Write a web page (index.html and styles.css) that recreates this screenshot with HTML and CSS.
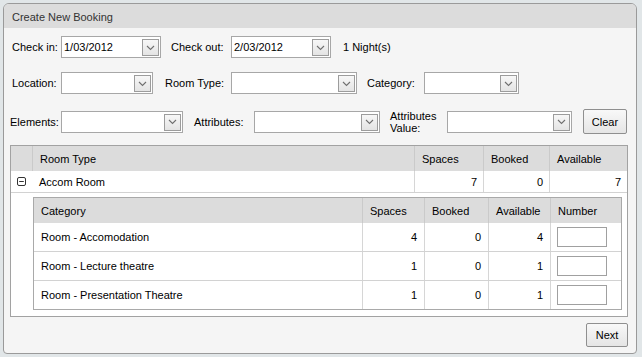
FILE: index.html
```html
<!DOCTYPE html>
<html>
<head>
<meta charset="utf-8">
<link rel="stylesheet" href="styles.css">
</head>
<body>
<div class="panel">
  <div class="panel-head">Create New Booking</div>
  <div class="panel-body">
    <div class="row r1">
      <span class="lbl w49">Check in:</span>
      <div class="sel w100"><span class="val">1/03/2012</span><span class="dd"><svg width="9" height="6" viewBox="0 0 9 6"><path d="M1 1 L4.5 4.5 L8 1" fill="none" stroke="#707070" stroke-width="1.1"/></svg></span></div>
      <span class="lbl w60 ml10">Check out:</span>
      <div class="sel w100"><span class="val">2/03/2012</span><span class="dd"><svg width="9" height="6" viewBox="0 0 9 6"><path d="M1 1 L4.5 4.5 L8 1" fill="none" stroke="#707070" stroke-width="1.1"/></svg></span></div>
      <span class="lbl ml12">1 Night(s)</span>
    </div>
    <div class="row r2">
      <span class="lbl w49">Location:</span>
      <div class="sel w92"><span class="val"></span><span class="dd"><svg width="9" height="6" viewBox="0 0 9 6"><path d="M1 1 L4.5 4.5 L8 1" fill="none" stroke="#707070" stroke-width="1.1"/></svg></span></div>
      <span class="lbl w66 ml12">Room Type:</span>
      <div class="sel w126"><span class="val"></span><span class="dd"><svg width="9" height="6" viewBox="0 0 9 6"><path d="M1 1 L4.5 4.5 L8 1" fill="none" stroke="#707070" stroke-width="1.1"/></svg></span></div>
      <span class="lbl w57 ml10">Category:</span>
      <div class="sel w95"><span class="val"></span><span class="dd"><svg width="9" height="6" viewBox="0 0 9 6"><path d="M1 1 L4.5 4.5 L8 1" fill="none" stroke="#707070" stroke-width="1.1"/></svg></span></div>
    </div>
    <div class="row r3">
      <span class="lbl w51 mlneg2">Elements:</span>
      <div class="sel w122"><span class="val"></span><span class="dd"><svg width="9" height="6" viewBox="0 0 9 6"><path d="M1 1 L4.5 4.5 L8 1" fill="none" stroke="#707070" stroke-width="1.1"/></svg></span></div>
      <span class="lbl w60 ml11">Attributes:</span>
      <div class="sel w126"><span class="val"></span><span class="dd"><svg width="9" height="6" viewBox="0 0 9 6"><path d="M1 1 L4.5 4.5 L8 1" fill="none" stroke="#707070" stroke-width="1.1"/></svg></span></div>
      <span class="lbl w57 ml10 two">Attributes<br>Value:</span>
      <div class="sel w125"><span class="val"></span><span class="dd"><svg width="9" height="6" viewBox="0 0 9 6"><path d="M1 1 L4.5 4.5 L8 1" fill="none" stroke="#707070" stroke-width="1.1"/></svg></span></div>
      <button class="btn clear">Clear</button>
    </div>

    <div class="tbl">
      <div class="trow outer thead">
        <div class="c"></div>
        <div class="c">Room Type</div>
        <div class="c">Spaces</div>
        <div class="c">Booked</div>
        <div class="c">Available</div>
      </div>
      <div class="trow outer tdata">
        <div class="c icon"><svg width="9" height="9" viewBox="0 0 9 9"><rect x="0.5" y="0.5" width="8" height="8" rx="1.5" fill="none" stroke="#333" stroke-width="1"/><path d="M2.2 4.5 H6.8" stroke="#333" stroke-width="1"/></svg></div>
        <div class="c nb">Accom Room</div>
        <div class="c num">7</div>
        <div class="c num">0</div>
        <div class="c num">7</div>
      </div>
      <div class="nest-wrap">
        <div class="ntbl">
          <div class="trow inner thead">
            <div class="c">Category</div>
            <div class="c">Spaces</div>
            <div class="c">Booked</div>
            <div class="c">Available</div>
            <div class="c">Number</div>
          </div>
          <div class="trow inner tdata first">
            <div class="c">Room - Accomodation</div>
            <div class="c num">4</div>
            <div class="c num">0</div>
            <div class="c num">4</div>
            <div class="c"><input class="numin" type="text"></div>
          </div>
          <div class="trow inner tdata">
            <div class="c">Room - Lecture theatre</div>
            <div class="c num">1</div>
            <div class="c num">0</div>
            <div class="c num">1</div>
            <div class="c"><input class="numin" type="text"></div>
          </div>
          <div class="trow inner tdata">
            <div class="c">Room - Presentation Theatre</div>
            <div class="c num">1</div>
            <div class="c num">0</div>
            <div class="c num">1</div>
            <div class="c"><input class="numin" type="text"></div>
          </div>
        </div>
      </div>
    </div>

    <div class="foot">
      <button class="btn next">Next</button>
    </div>
  </div>
</div>
</body>
</html>
```

FILE: styles.css
```css
* { box-sizing: border-box; }
html, body { margin: 0; padding: 0; }
body {
  background: #e1e6e8;
  font-family: "Liberation Sans", Arial, sans-serif;
  font-size: 11px;
  color: #000;
  width: 642px;
  height: 357px;
  overflow: hidden;
}
.panel {
  margin: 3px 0 0 3px;
  width: 634px;
  height: 351px;
  border: 1px solid #9a9a9a;
  border-radius: 6px 6px 4px 4px;
  background: #f5f5f5;
  overflow: hidden;
  display: flex;
  flex-direction: column;
}
.panel-head {
  height: 24px;
  background: #dcdcdc;
  padding: 3px 0 0 8px;
  line-height: 21px;
  font-size: 11px;
  color: #333;
}
.panel-body {
  flex: 1;
  display: flex;
  flex-direction: column;
}
.row {
  display: flex;
  align-items: center;
  padding-left: 8px;
}
.r1 { margin-top: 8px; height: 22px; }
.r2 { margin-top: 14px; height: 22px; }
.r3 { margin-top: 15px; height: 25px; }
.lbl { white-space: nowrap; flex: none; }
.two { white-space: normal; line-height: 12px; }
.w49 { width: 49px; }
.w51 { width: 51px; }
.w57 { width: 57px; }
.w60 { width: 60px; }
.w66 { width: 66px; }
.ml10 { margin-left: 10px; }
.ml11 { margin-left: 11px; }
.ml12 { margin-left: 12px; }
.mlneg2 { margin-left: -2px; }
.sel {
  flex: none;
  height: 22px;
  border: 1px solid #a7a7a7;
  background: #fff;
  display: flex;
  align-items: stretch;
}
.w92 { width: 92px; }
.w95 { width: 95px; }
.w100 { width: 100px; }
.w122 { width: 122px; }
.w125 { width: 125px; }
.w126 { width: 126px; }
.sel .val {
  flex: 1;
  padding-left: 2px;
  line-height: 20px;
  color: #000;
}
.sel .dd {
  width: 17px;
  margin: 2px 1px 1px 0;
  border: 1px solid #9c9c9c;
  background: linear-gradient(#f7f7f7, #e4e4e4);
  display: flex;
  align-items: center;
  justify-content: center;
}
.btn {
  font-family: "Liberation Sans", Arial, sans-serif;
  font-size: 11px;
  color: #000;
  border: 1px solid #8f8f8f;
  border-radius: 2px;
  background: linear-gradient(#f8f8f8, #e5e5e5);
  padding: 0;
}
.clear {
  margin-left: 11px;
  width: 44px;
  height: 25px;
}
.tbl {
  margin: 11px 8px 0 6px;
  border: 1px solid #a2a2a2;
  background: #fff;
}
.trow { display: grid; }
.outer { grid-template-columns: 21px 382px 69px 66px 78px; }
.inner { grid-template-columns: 328px 62px 64px 62px 71px; }
.thead { background: #dcdcdc; height: 25px; }
.outer.tdata { height: 22px; border-bottom: 1px solid #d2d2d2; }
.c {
  display: flex;
  align-items: center;
  padding: 0 7px;
  white-space: nowrap;
  color: #000;
}
.trow .c + .c { border-left: 1px solid #cacaca; }
.outer.tdata .c.nb { border-left: none; }
.outer.tdata .c.num + .c, .outer.tdata .c.nb + .c { border-left: 1px solid #d6d6d6; }
.c.num { justify-content: flex-end; padding-right: 6px; }
.inner .c.num { padding-right: 7px; }
.c.icon { padding: 0 0 0 6px; }
.nest-wrap { padding: 4px 5px 6px 22px; }
.ntbl {
  border: 1px solid #a9a9a9;
  background: #fff;
}
.inner.tdata { height: 29px; border-top: 1px solid #d2d2d2; }
.inner.tdata.first { height: 28px; border-top: none; }
.inner.tdata .c + .c { border-left: 1px solid #d6d6d6; }
.numin {
  width: 50px;
  height: 20px;
  border: 1px solid #a0a0a0;
  background: #fff;
  margin: 0 0 0 -1px;
  padding: 0;
}
.foot {
  display: flex;
  justify-content: flex-end;
  padding: 6px 8px 0 0;
}
.next {
  width: 42px;
  height: 24px;
}
```
